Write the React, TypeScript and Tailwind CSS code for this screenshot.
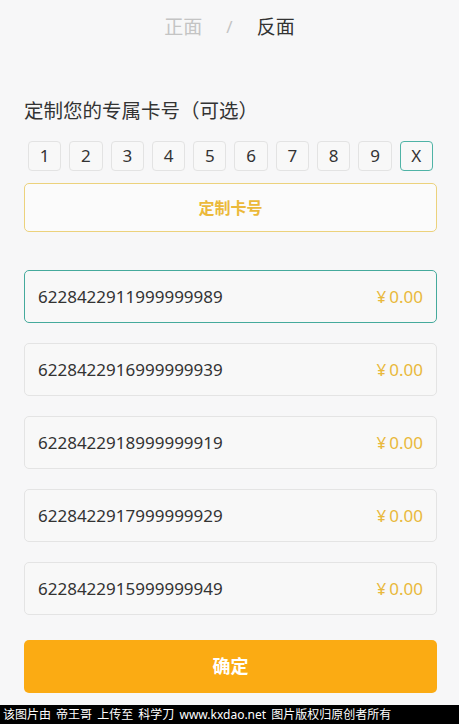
import { useState } from "react";

const keys = ["1", "2", "3", "4", "5", "6", "7", "8", "9", "X"];

const cards = [
  "6228422911999999989",
  "6228422916999999939",
  "6228422918999999919",
  "6228422917999999929",
  "6228422915999999949",
];

export default function App() {
  const [activeKey, setActiveKey] = useState("X");
  const [selected, setSelected] = useState(0);

  return (
    <div
      className="w-[459px] h-[724px] bg-[#f7f7f8] flex flex-col overflow-hidden"
      style={{ fontFamily: '"Noto Sans", "Noto Sans CJK SC", sans-serif' }}
    >
      {/* tabs */}
      <div className="h-[52px] flex items-center justify-center gap-[24px] text-[19px] pt-[2px]">
        <span className="text-[#c4c4c4]">正面</span>
        <span className="text-[#c4c4c4] text-[17px]">/</span>
        <span className="text-[#333333]">反面</span>
      </div>

      <div className="pl-[24px] pr-[22px] flex flex-col">
        <div className="mt-[44px] text-[19.5px] leading-[30px] text-[#333333]">
          定制您的专属卡号（可选）
        </div>

        <div className="mt-[15px] flex gap-[8px] px-[4px]">
          {keys.map((k) => (
            <button
              key={k}
              onClick={() => setActiveKey(k)}
              className={
                activeKey === k
                  ? "w-[34px] h-[30px] rounded-[4px] border border-[#4fb3a6] bg-[#f8f8f8] text-[17px] text-[#333333] flex items-center justify-center"
                  : "w-[34px] h-[30px] rounded-[4px] border border-[#e3e3e3] bg-[#f8f8f8] text-[17px] text-[#333333] flex items-center justify-center"
              }
            >
              {k}
            </button>
          ))}
        </div>

        <button className="mt-[12px] h-[49px] rounded-[5px] border-[1.5px] border-[#ecd27c] bg-[#fbfbfb] text-[16px] font-bold text-[#ebb93a]">
          定制卡号
        </button>

        <div className="mt-[38px] flex flex-col gap-[20px]">
          {cards.map((c, i) => (
            <div
              key={c}
              onClick={() => setSelected(i)}
              className={
                selected === i
                  ? "h-[53px] rounded-[5px] border border-[#45aa9c] bg-[#f8f8f8] flex items-center justify-between pl-[13px] pr-[13px]"
                  : "h-[53px] rounded-[5px] border border-[#e4e4e4] bg-[#f8f8f8] flex items-center justify-between pl-[13px] pr-[13px]"
              }
            >
              <span className="text-[17px] text-[#333333]">{c}</span>
              <span className="text-[17px] text-[#e9b93c]">
                <span className="mr-[3px]">¥</span>0.00
              </span>
            </div>
          ))}
        </div>

        <button className="mt-[25px] h-[53px] rounded-[5px] bg-[#fbab13] text-[18px] font-bold text-white">
          确定
        </button>
      </div>

      <div className="mt-auto h-[19px] bg-black text-white text-[12px] leading-[19px] pl-[3px] whitespace-nowrap [word-spacing:2px]">
        该图片由 帝王哥 上传至 科学刀 www.kxdao.net 图片版权归原创者所有
      </div>
    </div>
  );
}
